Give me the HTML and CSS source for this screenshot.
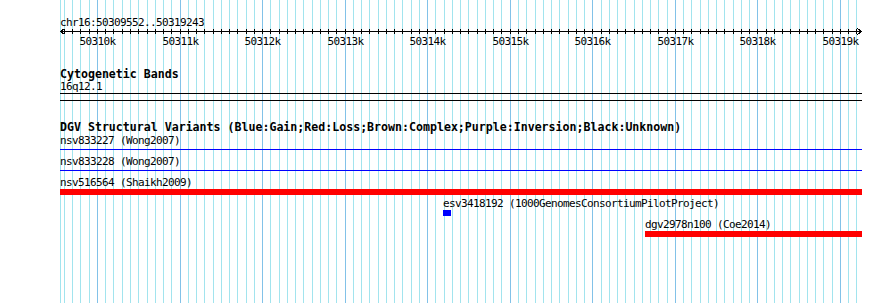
FILE: index.html
```html
<!DOCTYPE html>
<html lang="en">
<head>
<meta charset="UTF-8" />
<meta name="viewport" content="width=device-width, initial-scale=1" />
<title>chr16:50309552..50319243</title>
<link rel="stylesheet" href="styles.css">
</head>
<body>
  <div class="browser">
    <svg class="grid" id="grid" width="890" height="303" aria-hidden="true"></svg>
    <div class="panel">
      <div class="position">chr16:50309552..50319243</div>
      <svg class="ruler" id="ruler" width="802" height="22" aria-label="Scale"></svg>

      <section class="track cytoband">
        <h2 class="track-title">Cytogenetic Bands</h2>
        <div class="feature-label">16q12.1</div>
        <div class="band"></div>
      </section>

      <section class="track dgv">
        <h2 class="track-title">DGV Structural Variants (Blue:Gain;Red:Loss;Brown:Complex;Purple:Inversion;Black:Unknown)</h2>
        <div class="row">
          <div class="feature-label">nsv833227 (Wong2007)</div>
          <div class="glyph line gain" style="width: 802px;"></div>
        </div>
        <div class="row">
          <div class="feature-label">nsv833228 (Wong2007)</div>
          <div class="glyph line gain" style="width: 802px;"></div>
        </div>
        <div class="row">
          <div class="feature-label">nsv516564 (Shaikh2009)</div>
          <div class="glyph bar loss" style="width: 802px;"></div>
        </div>
        <div class="row" style="margin-left: 383px;">
          <div class="feature-label">esv3418192 (1000GenomesConsortiumPilotProject)</div>
          <div class="glyph bar gain" style="width: 8px;"></div>
        </div>
        <div class="row" style="margin-left: 585px;">
          <div class="feature-label">dgv2978n100 (Coe2014)</div>
          <div class="glyph bar loss" style="width: 217px;"></div>
        </div>
      </section>
    </div>
  </div>

  <script>
    (function() {
      const NS = 'http://www.w3.org/2000/svg';
      const start = 50309552;
      const end = 50319243;
      const left = 60;
      const width = 800;

      function toX(bp) {
        return Math.round(left + (bp - start) * width / (end - start));
      }

      function el(name, attrs, parent) {
        const node = document.createElementNS(NS, name);
        for (const key in attrs) node.setAttribute(key, attrs[key]);
        parent.appendChild(node);
        return node;
      }

      // background grid, one line every 100 bp, darker every 1 kb
      const grid = document.getElementById('grid');
      el('rect', { x: left, y: 0, width: 1, height: 303, class: 'minor' }, grid);
      for (let bp = 50309600; bp <= 50319200; bp += 100) {
        el('rect', {
          x: toX(bp), y: 0, width: 1, height: 303,
          class: bp % 1000 === 0 ? 'major' : 'minor'
        }, grid);
      }

      // scale bar
      const ruler = document.getElementById('ruler');
      el('line', { x1: 0, y1: 5.5, x2: 801, y2: 5.5 }, ruler);
      el('polyline', { points: '4.5,2.5 0.5,5.5 4.5,8.5' }, ruler);
      el('polyline', { points: '797.5,2.5 801.5,5.5 797.5,8.5' }, ruler);
      for (let bp = 50309600; bp <= 50319200; bp += 100) {
        const x = toX(bp) - left + 0.5;
        el('line', { x1: x, y1: 3, x2: x, y2: 8 }, ruler);
        if (bp % 1000 === 0) {
          const label = el('text', { x: x, y: 19, 'text-anchor': 'middle' }, ruler);
          label.textContent = (bp / 1000) + 'k';
        }
      }
    })();
  </script>
</body>
</html>
```

FILE: styles.css
```css
:root {
  --grid-minor: #a2e4ee;
  --grid-major: #82c2e8;
  --gain: #0000ff;
  --loss: #ff0000;
}
* {
  box-sizing: border-box;
}
body {
  margin: 0;
  background: #fff;
  color: #000;
  font-family: "DejaVu Sans Mono", "Liberation Mono", monospace;
  font-size: 11px;
  letter-spacing: -0.62px;
}
.browser {
  position: relative;
  width: 890px;
  height: 303px;
  overflow: hidden;
}
.grid {
  position: absolute;
  top: 0;
  left: 0;
}
.grid .minor {
  fill: var(--grid-minor);
}
.grid .major {
  fill: var(--grid-major);
}
.panel {
  position: relative;
  padding: 16px 0 0 60px;
}
.position {
  line-height: 13px;
  white-space: nowrap;
}
.ruler {
  display: block;
  margin-top: -3px;
  overflow: visible;
  shape-rendering: crispEdges;
}
.ruler line,
.ruler polyline {
  stroke: #000;
  stroke-width: 1;
  fill: none;
}
.ruler text {
  font-family: "DejaVu Sans Mono", "Liberation Mono", monospace;
  font-size: 11px;
  letter-spacing: -0.62px;
  fill: #000;
}
.track-title {
  margin: 0;
  font-size: 11.6px;
  font-weight: bold;
  letter-spacing: 0;
  line-height: 14px;
  white-space: nowrap;
}
.feature-label {
  white-space: nowrap;
}
.cytoband {
  margin-top: 19px;
}
.cytoband .feature-label {
  line-height: 12px;
}
.band {
  width: 802px;
  height: 8px;
  border-top: 1px solid #000;
  border-bottom: 1px solid #000;
}
.dgv {
  margin-top: 20px;
}
.dgv .track-title {
  line-height: 13px;
}
.row {
  height: 21px;
}
.row .feature-label {
  line-height: 13px;
}
.glyph.bar {
  height: 6px;
}
.glyph.line {
  height: 1px;
  margin-top: 2px;
}
.gain {
  background: var(--gain);
}
.loss {
  background: var(--loss);
}
```
